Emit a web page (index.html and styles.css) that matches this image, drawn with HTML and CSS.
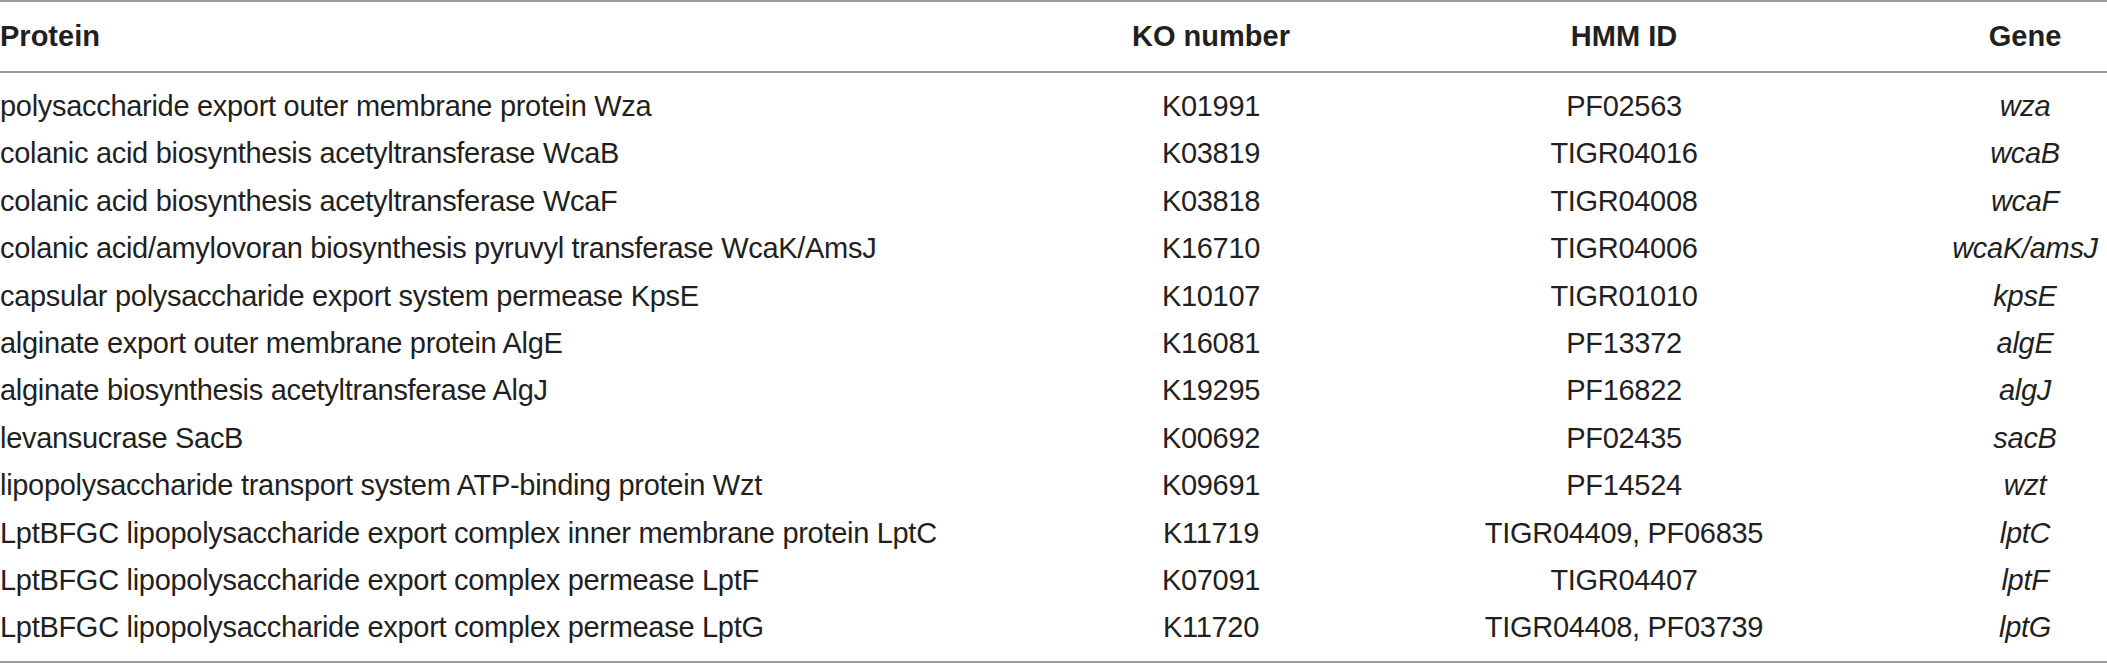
FILE: index.html
```html
<!DOCTYPE html>
<html lang="en">
<head>
<meta charset="utf-8">
<title>Protein table</title>
<link rel="stylesheet" href="styles.css">
</head>
<body>
<table class="tbl">
  <colgroup>
    <col class="c-protein">
    <col class="c-ko">
    <col class="c-hmm">
    <col class="c-gene">
  </colgroup>
  <thead>
    <tr>
      <th class="protein">Protein</th>
      <th class="ko">KO number</th>
      <th class="hmm">HMM ID</th>
      <th class="gene">Gene</th>
    </tr>
  </thead>
  <tbody>
    <tr><td class="protein">polysaccharide export outer membrane protein Wza</td><td class="ko">K01991</td><td class="hmm">PF02563</td><td class="gene"><i>wza</i></td></tr>
    <tr><td class="protein">colanic acid biosynthesis acetyltransferase WcaB</td><td class="ko">K03819</td><td class="hmm">TIGR04016</td><td class="gene"><i>wcaB</i></td></tr>
    <tr><td class="protein">colanic acid biosynthesis acetyltransferase WcaF</td><td class="ko">K03818</td><td class="hmm">TIGR04008</td><td class="gene"><i>wcaF</i></td></tr>
    <tr><td class="protein">colanic acid/amylovoran biosynthesis pyruvyl transferase WcaK/AmsJ</td><td class="ko">K16710</td><td class="hmm">TIGR04006</td><td class="gene"><i>wcaK/amsJ</i></td></tr>
    <tr><td class="protein">capsular polysaccharide export system permease KpsE</td><td class="ko">K10107</td><td class="hmm">TIGR01010</td><td class="gene"><i>kpsE</i></td></tr>
    <tr><td class="protein">alginate export outer membrane protein AlgE</td><td class="ko">K16081</td><td class="hmm">PF13372</td><td class="gene"><i>algE</i></td></tr>
    <tr><td class="protein">alginate biosynthesis acetyltransferase AlgJ</td><td class="ko">K19295</td><td class="hmm">PF16822</td><td class="gene"><i>algJ</i></td></tr>
    <tr><td class="protein">levansucrase SacB</td><td class="ko">K00692</td><td class="hmm">PF02435</td><td class="gene"><i>sacB</i></td></tr>
    <tr><td class="protein">lipopolysaccharide transport system ATP-binding protein Wzt</td><td class="ko">K09691</td><td class="hmm">PF14524</td><td class="gene"><i>wzt</i></td></tr>
    <tr><td class="protein">LptBFGC lipopolysaccharide export complex inner membrane protein LptC</td><td class="ko">K11719</td><td class="hmm">TIGR04409, PF06835</td><td class="gene"><i>lptC</i></td></tr>
    <tr><td class="protein">LptBFGC lipopolysaccharide export complex permease LptF</td><td class="ko">K07091</td><td class="hmm">TIGR04407</td><td class="gene"><i>lptF</i></td></tr>
    <tr><td class="protein">LptBFGC lipopolysaccharide export complex permease LptG</td><td class="ko">K11720</td><td class="hmm">TIGR04408, PF03739</td><td class="gene"><i>lptG</i></td></tr>
  </tbody>
</table>
</body>
</html>
```
FILE: styles.css
```css
html, body {
  margin: 0;
  padding: 0;
  background: #ffffff;
}

.tbl {
  width: 2107px;
  border-collapse: collapse;
  table-layout: fixed;
  font-family: "Liberation Sans", Arial, sans-serif;
  font-size: 29px;
  color: #231f20;
  border-top: 2px solid #9a9a9a;
  border-bottom: 2px solid #9a9a9a;
}

.c-protein { width: 1001px; }
.c-ko { width: 420px; }
.c-hmm { width: 406px; }
.c-gene { width: 280px; }

.tbl th,
.tbl td {
  padding: 0;
  white-space: nowrap;
  vertical-align: middle;
}

.tbl thead th {
  height: 69px;
  line-height: 69px;
  font-weight: bold;
  border-bottom: 2px solid #9a9a9a;
}

.tbl tbody td {
  height: 47.4px;
  line-height: 47.4px;
  letter-spacing: -0.3px;
}

.tbl tbody tr:first-child td {
  padding-top: 10px;
}

.tbl tbody tr:last-child td {
  padding-bottom: 9px;
}

.protein {
  text-align: left;
  padding-left: 1px;
}

.ko,
.hmm {
  text-align: center;
}

.tbl .gene {
  text-align: center;
  padding-left: 116px;
}

.gene i {
  font-style: italic;
}
```
